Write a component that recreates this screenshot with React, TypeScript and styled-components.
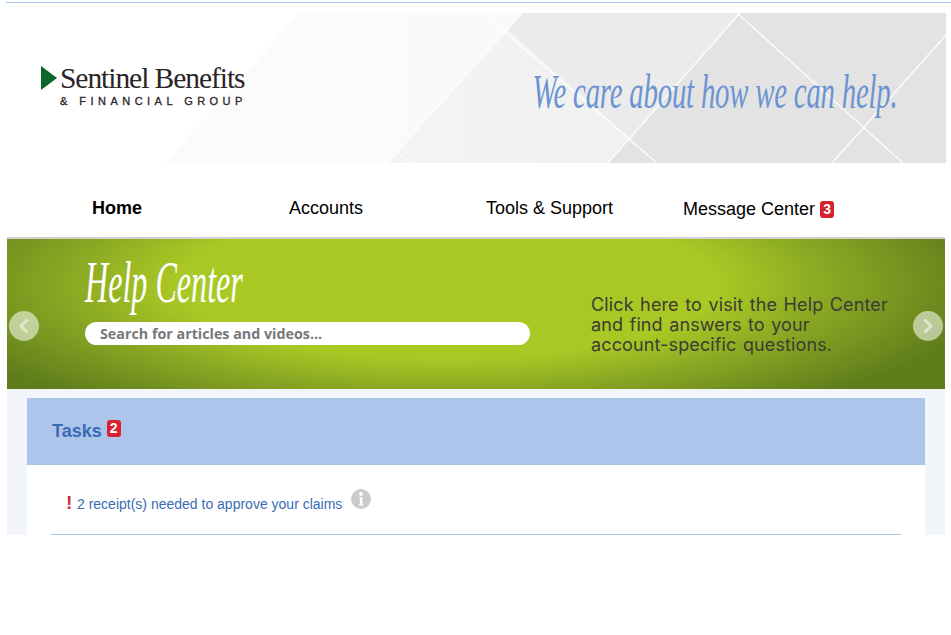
import React from "react";
import styled, { createGlobalStyle } from "styled-components";

const Global = createGlobalStyle`
  html, body { margin: 0; padding: 0; background: #fff; }
  body { font-family: "Liberation Sans", Arial, sans-serif; color: #000; }
`;

const Page = styled.div`
  width: 951px;
  height: 635px;
  padding: 2px 0 0 6px;
  box-sizing: border-box;
  overflow: hidden;
`;
const TopRule = styled.div`
  height: 1px;
  background: #a9c4ec;
  margin-right: -6px;
`;
const Banner = styled.header`
  position: relative;
  width: 940px;
  height: 150px;
  margin-top: 10px;
  display: flex;
  align-items: flex-start;
  justify-content: space-between;
`;
const BannerArt = styled.svg`
  position: absolute;
  inset: 0;
`;
const Logo = styled.div`
  position: relative;
  display: flex;
  margin: 50px 0 0 35px;
`;
const LogoMark = styled.svg`
  margin: 3px 3px 0 0;
  flex: none;
`;
const LogoText = styled.div`
  display: flex;
  flex-direction: column;
`;
const LogoName = styled.span`
  font: 400 29.5px/30px "Liberation Serif", serif;
  letter-spacing: -1.05px;
  color: #2b2527;
  white-space: nowrap;
`;
const LogoSub = styled.span`
  font: 400 11px/12px "Liberation Sans", sans-serif;
  -webkit-text-stroke: 0.3px #2b2527;
  letter-spacing: 4.47px;
  color: #2b2527;
  margin-top: 2px;
  white-space: nowrap;
`;
const Tagline = styled.div`
  position: relative;
  margin: 49px 48px 0 0;
  font: italic 400 48px/60px "Liberation Serif", serif;
  letter-spacing: -0.35px;
  color: #6c94d2;
  white-space: nowrap;
  transform: scaleX(0.6);
  transform-origin: right center;
`;
const Nav = styled.nav`
  height: 74px;
  margin-left: 1px;
  width: 938px;
  box-sizing: border-box;
  padding: 16px 0 0 85px;
  display: grid;
  grid-template-columns: 197px 197px 197px 1fr;
  align-items: center;
`;
const NavItem = styled.a<{ $active?: boolean; $low?: boolean }>`
  font-size: 18px;
  line-height: 22px;
  font-weight: ${(p) => (p.$active ? 700 : 400)};
  color: #000;
  display: flex;
  align-items: center;
  gap: 5px;
  margin-top: ${(p) => (p.$low ? "2px" : "0")};
`;
const Badge = styled.span`
  width: 14px;
  height: 17px;
  border-radius: 3px;
  background: #d9202f;
  color: #fff;
  font-size: 14px;
  font-weight: 700;
  line-height: 17px;
  text-align: center;
`;
const Hero = styled.section`
  position: relative;
  box-sizing: border-box;
  margin-left: 1px;
  width: 938px;
  height: 152px;
  border-top: 2px solid #d0d0d0;
  background: radial-gradient(
    ellipse 58% 100% at 47% 30%,
    #a9c824 0%,
    #a9c824 50%,
    #8aa823 70%,
    #5f7d1b 100%
  );
  display: flex;
  padding-left: 78px;
`;
const HeroLeft = styled.div`
  width: 445px;
  flex: none;
  display: flex;
  flex-direction: column;
`;
const HeroTitle = styled.div`
  font: italic 400 60px/66px "Liberation Serif", serif;
  color: #fff;
  margin-top: 10px;
  height: 73px;
  white-space: nowrap;
  transform: scaleX(0.535);
  transform-origin: left center;
`;
const Search = styled.div`
  height: 23px;
  border-radius: 12px;
  background: #fff;
  padding-left: 15px;
  font: 700 14.3px/24px "Open Sans", sans-serif;
  color: #77777b;
`;
const HeroCopy = styled.p`
  margin: 56px 0 0 61px;
  font: 400 18px/20px "Inter", sans-serif;
  letter-spacing: 0.12px;
  word-spacing: 1.3px;
  color: #3c3c32;
  white-space: nowrap;
`;
const CarouselArrow = styled.button<{ $side: "left" | "right" }>`
  position: absolute;
  top: 72px;
  ${(p) => p.$side}: 2px;
  width: 30px;
  height: 30px;
  padding: 0;
  border: 0;
  border-radius: 50%;
  background: rgba(255, 255, 255, 0.55);
  display: flex;
  align-items: center;
  justify-content: center;
`;
const Panel = styled.section`
  margin-left: 1px;
  width: 938px;
  height: 146px;
  box-sizing: border-box;
  padding: 9px 20px 0;
  background: #f2f6fa;
`;
const Card = styled.div`
  background: #fff;
  height: 137px;
`;
const CardHeader = styled.div`
  height: 67px;
  box-sizing: border-box;
  padding: 22px 0 0 25px;
  background: #adc5ea;
  display: flex;
  align-items: flex-start;
  gap: 5px;
`;
const CardTitle = styled.h2`
  margin: 0;
  font-size: 18px;
  line-height: 22px;
  font-weight: 700;
  color: #3a6cb4;
`;
const CardBody = styled.div`
  height: 70px;
  box-sizing: border-box;
  margin: 0 24px;
  border-bottom: 1px solid #adc5ea;
  padding: 24px 0 0 15px;
  display: flex;
  align-items: flex-start;
`;
const Alert = styled.span`
  font-size: 19px;
  line-height: 20px;
  font-weight: 700;
  color: #c0343a;
  width: 11px;
  margin-top: 4px;
`;
const TaskLink = styled.a`
  font-size: 14px;
  line-height: 20px;
  color: #3a6cb4;
  margin-top: 5px;
`;
const InfoIcon = styled.svg`
  margin-left: 9px;
`;

const Chevron = ({ dir }: { dir: "left" | "right" }) => (
  <svg width="12" height="16" viewBox="0 0 12 16" fill="none">
    <path
      d={dir === "left" ? "M9.5 1.5 3 8l6.5 6.5" : "M2.5 1.5 9 8l-6.5 6.5"}
      stroke="#dfe6c9"
      strokeWidth="3"
    />
  </svg>
);

export default function App() {
  return (
    <Page>
      <Global />
      <TopRule />
      <Banner>
        <BannerArt width="940" height="150" viewBox="0 0 940 150">
          <defs>
            <linearGradient id="mid" x1="0" y1="0" x2="1" y2="0">
              <stop offset="0" stopColor="#f4f4f4" />
              <stop offset="1" stopColor="#ececec" />
            </linearGradient>
            <linearGradient id="lite" x1="0" y1="0" x2="1" y2="0">
              <stop offset="0" stopColor="#fbfbfb" />
              <stop offset="1" stopColor="#f8f8f8" />
            </linearGradient>
          </defs>
          <polygon points="159,150 294,0 940,0 940,150" fill="url(#lite)" />
          <polygon points="516,0 940,0 940,150 381,150" fill="url(#mid)" />
          <polygon points="734,0 940,0 940,150 602,150" fill="#e3e3e3" />
          <polygon points="516,0 734,0 624,125 502,17" fill="#ebebeb" />
          <g stroke="#fff" fill="none" opacity="0.85">
            <path d="M268 29 404 150" strokeWidth="1.2" />
            <path d="M516 0 381 150" strokeWidth="1.4" />
            <path d="M477 0 651 150" strokeWidth="1.6" />
            <path d="M734 0 602 150" strokeWidth="1.6" />
            <path d="M731 0 897 150" strokeWidth="1.6" />
            <path d="M940 22 826 150" strokeWidth="1.6" />
          </g>
        </BannerArt>
        <Logo>
          <LogoMark width="16" height="24" viewBox="0 0 16 24">
            <polygon points="0,0 16,12 0,24" fill="#0b6629" />
          </LogoMark>
          <LogoText>
            <LogoName>Sentinel Benefits</LogoName>
            <LogoSub>&amp; FINANCIAL GROUP</LogoSub>
          </LogoText>
        </Logo>
        <Tagline>We care about how we can help.</Tagline>
      </Banner>
      <Nav>
        <NavItem $active>Home</NavItem>
        <NavItem>Accounts</NavItem>
        <NavItem>Tools &amp; Support</NavItem>
        <NavItem $low>
          Message Center <Badge>3</Badge>
        </NavItem>
      </Nav>
      <Hero>
        <HeroLeft>
          <HeroTitle>Help Center</HeroTitle>
          <Search>Search for articles and videos...</Search>
        </HeroLeft>
        <HeroCopy>
          Click here to visit the Help Center
          <br />
          and find answers to your
          <br />
          account-specific questions.
        </HeroCopy>
        <CarouselArrow $side="left" aria-label="Previous">
          <Chevron dir="left" />
        </CarouselArrow>
        <CarouselArrow $side="right" aria-label="Next">
          <Chevron dir="right" />
        </CarouselArrow>
      </Hero>
      <Panel>
        <Card>
          <CardHeader>
            <CardTitle>Tasks</CardTitle>
            <Badge>2</Badge>
          </CardHeader>
          <CardBody>
            <Alert>!</Alert>
            <TaskLink>2 receipt(s) needed to approve your claims</TaskLink>
            <InfoIcon width="20" height="20" viewBox="0 0 20 20">
              <circle cx="10" cy="10" r="10" fill="#cbcbcb" />
              <circle cx="10" cy="5" r="1.9" fill="#fff" />
              <path d="M8 8.2h3.4v7.2H13v1.2H7.6v-1.2h1.3V9.4H8z" fill="#fff" />
            </InfoIcon>
          </CardBody>
        </Card>
      </Panel>
    </Page>
  );
}
